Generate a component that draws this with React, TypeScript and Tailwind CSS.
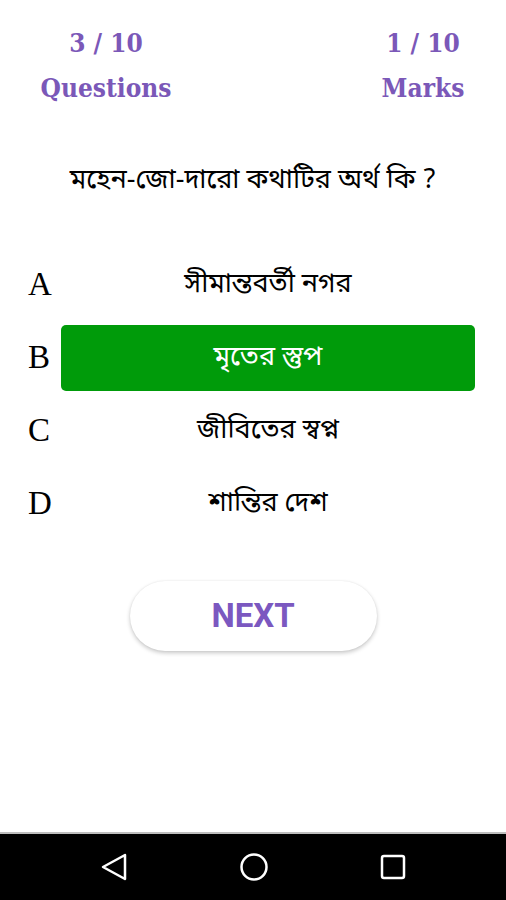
import React from "react";

const options = [
  { letter: "A", text: "সীমান্তবর্তী নগর", selected: false },
  { letter: "B", text: "মৃতের স্তুপ", selected: true },
  { letter: "C", text: "জীবিতের স্বপ্ন", selected: false },
  { letter: "D", text: "শান্তির দেশ", selected: false },
];

const bn = { fontFamily: '"Noto Sans Bengali", "Lohit Bengali", "Noto Sans", sans-serif' };

export default function App() {
  return (
    <div className="w-[506px] h-[900px] bg-white flex flex-col overflow-hidden">
      <div className="flex-1 flex flex-col">
        <div
          className="flex justify-between px-[38px] pt-[21px] text-[#7b58b8] font-bold text-[26px] leading-[45px]"
          style={{ fontFamily: '"DejaVu Serif Condensed", "DejaVu Serif", serif' }}
        >
          <div className="flex flex-col items-center w-[136px]">
            <span>3 / 10</span>
            <span>Questions</span>
          </div>
          <div className="flex flex-col items-center w-[86px] mr-[2px]">
            <span>1 / 10</span>
            <span>Marks</span>
          </div>
        </div>
        <div className="mt-[50px] text-center text-[27px] text-black leading-[40px]" style={bn}>
          মহেন-জো-দারো কথাটির অর্থ কি ?
        </div>
        <div className="mt-[51px] flex flex-col gap-[7px] pl-[28px] pr-[31px]">
          {options.map((o) => (
            <div key={o.letter} className="flex items-center h-[66px]">
              <div
                className="w-[33px] text-[33px] text-black"
                style={{ fontFamily: '"Liberation Serif", serif' }}
              >
                {o.letter}
              </div>
              <div
                className={
                  "flex-1 h-full flex items-center justify-center rounded-[5px] text-[27px] " +
                  (o.selected ? "bg-[#009b0a] text-white" : "text-black")
                }
                style={bn}
              >
                {o.text}
              </div>
            </div>
          ))}
        </div>
        <div className="flex justify-center mt-[44px]">
          <div
            className="w-[247px] h-[70px] rounded-full bg-white flex items-center justify-center text-[#7b58c0] font-bold text-[33px] shadow-[0_2px_4px_rgba(0,0,0,0.22),0_0_2px_rgba(0,0,0,0.06)]"
            style={{ fontFamily: 'Roboto, sans-serif' }}
          >
            NEXT
          </div>
        </div>
      </div>
      <div className="h-[68px] bg-black border-t-[2px] border-[#bdbdbd] flex items-center justify-center">
        <div className="flex items-center w-[306px] justify-between">
          <svg width="28" height="30" viewBox="0 0 28 30">
            <path d="M25 3 L3 15 L25 27 Z" fill="none" stroke="white" strokeWidth="2.5" strokeLinejoin="round" />
          </svg>
          <svg width="30" height="30" viewBox="0 0 30 30">
            <circle cx="15" cy="15" r="12.5" fill="none" stroke="white" strokeWidth="2.5" />
          </svg>
          <svg width="26" height="26" viewBox="0 0 26 26">
            <rect x="2" y="2" width="22" height="22" rx="2" fill="none" stroke="white" strokeWidth="2.5" />
          </svg>
        </div>
      </div>
    </div>
  );
}
